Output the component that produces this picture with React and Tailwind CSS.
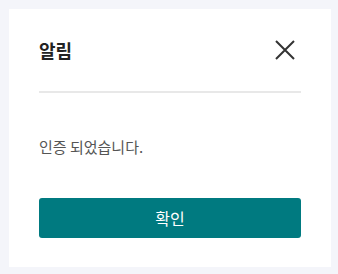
export default function App() {
    return (
        <div className="h-[274px] w-[338px] bg-[#f4f5fa] p-[9px]" style={{ fontFamily: '"Noto Sans CJK KR", "Noto Sans", sans-serif' }}>
            <div className="h-[258px] w-[322px] bg-white px-[30px]">
                {/* Header */}
                <div className="flex items-center justify-between border-b-2 border-[#e8e8e8] pt-[29px] pb-[29px]">
                    <h2 className="text-[18px] leading-[24px] font-bold text-[#222]">알림</h2>
                    <button className="mr-[6px] text-[#333]">
                        <svg width="20" height="20" viewBox="0 0 20 20" fill="none" stroke="currentColor" strokeWidth="2">
                            <path d="M1 1L19 19M19 1L1 19" />
                        </svg>
                    </button>
                </div>

                {/* Body */}
                <p className="mt-[43px] text-[15px] leading-[22px] text-[#555]">인증 되었습니다.</p>

                <button className="mt-[40px] flex h-[40px] w-full items-center justify-center rounded-[3px] bg-[#007a80] text-[16px] text-white">
                    확인
                </button>
            </div>
        </div>
    );
}
